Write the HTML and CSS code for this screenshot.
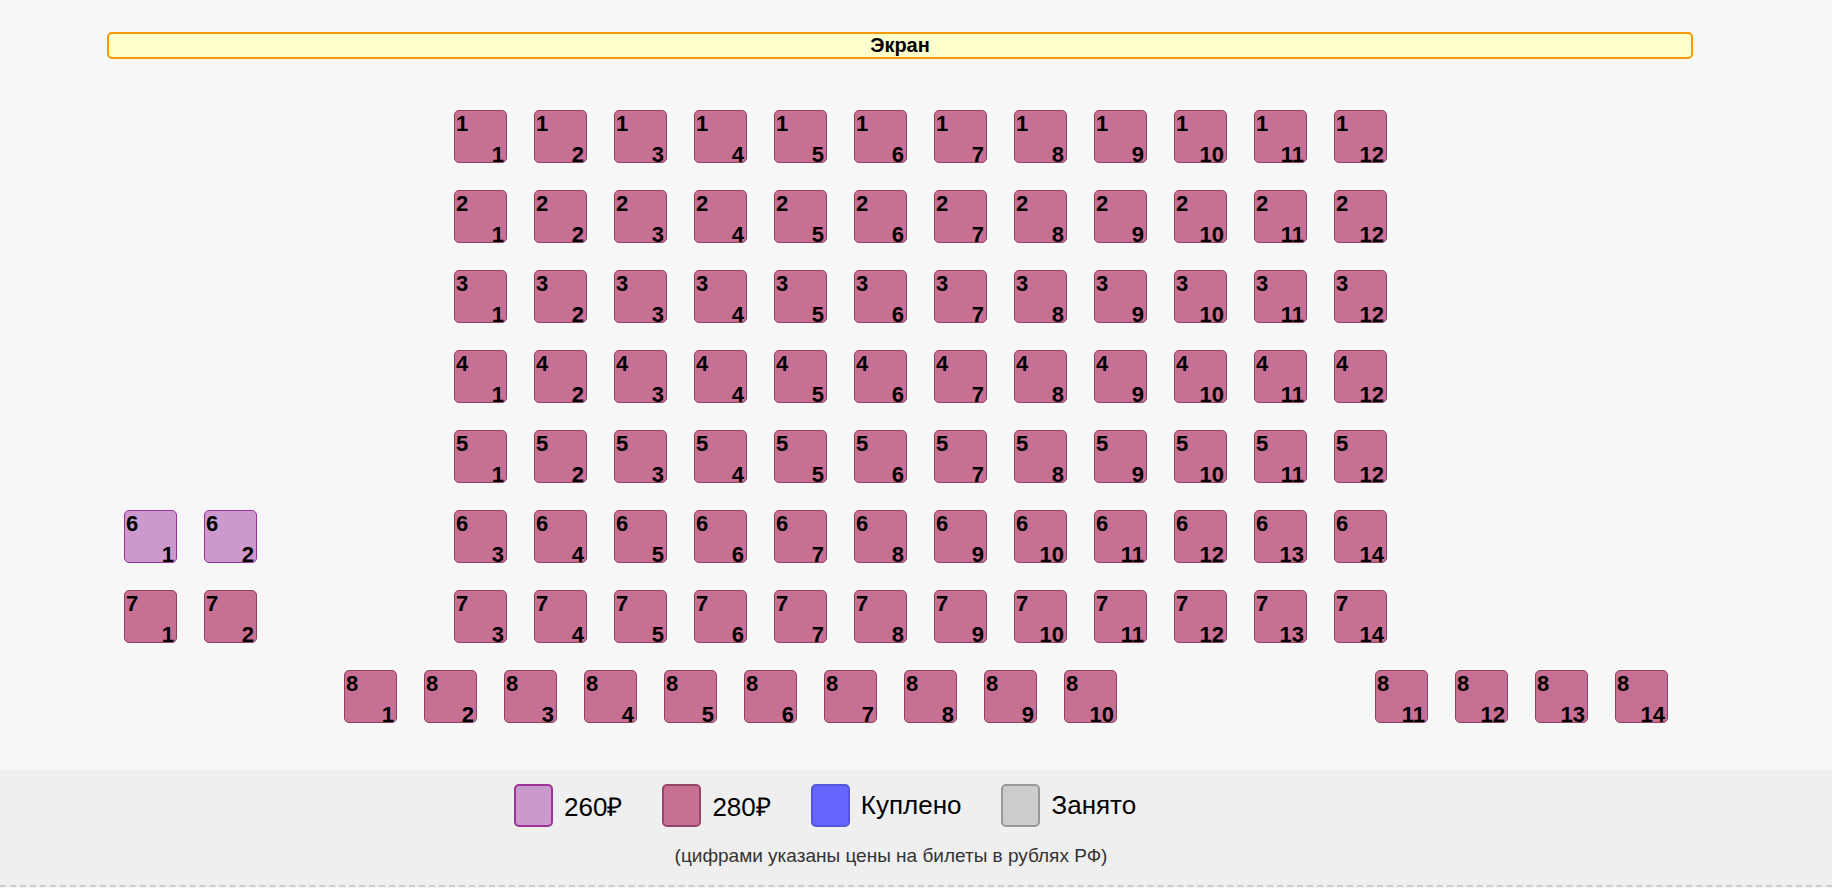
FILE: index.html
```html
<!DOCTYPE html>
<html lang="ru">
<head>
<meta charset="utf-8">
<title>Схема зала</title>
<link rel="stylesheet" href="styles.css">
</head>
<body>
<div class="page">
  <div class="screen">Экран</div>
  <div class="hall">
    <div class="row row-main">
      <div class="seat"><span class="r">1</span><span class="n">1</span></div>
      <div class="seat"><span class="r">1</span><span class="n">2</span></div>
      <div class="seat"><span class="r">1</span><span class="n">3</span></div>
      <div class="seat"><span class="r">1</span><span class="n">4</span></div>
      <div class="seat"><span class="r">1</span><span class="n">5</span></div>
      <div class="seat"><span class="r">1</span><span class="n">6</span></div>
      <div class="seat"><span class="r">1</span><span class="n">7</span></div>
      <div class="seat"><span class="r">1</span><span class="n">8</span></div>
      <div class="seat"><span class="r">1</span><span class="n">9</span></div>
      <div class="seat"><span class="r">1</span><span class="n">10</span></div>
      <div class="seat"><span class="r">1</span><span class="n">11</span></div>
      <div class="seat"><span class="r">1</span><span class="n">12</span></div>
    </div>
    <div class="row row-main">
      <div class="seat"><span class="r">2</span><span class="n">1</span></div>
      <div class="seat"><span class="r">2</span><span class="n">2</span></div>
      <div class="seat"><span class="r">2</span><span class="n">3</span></div>
      <div class="seat"><span class="r">2</span><span class="n">4</span></div>
      <div class="seat"><span class="r">2</span><span class="n">5</span></div>
      <div class="seat"><span class="r">2</span><span class="n">6</span></div>
      <div class="seat"><span class="r">2</span><span class="n">7</span></div>
      <div class="seat"><span class="r">2</span><span class="n">8</span></div>
      <div class="seat"><span class="r">2</span><span class="n">9</span></div>
      <div class="seat"><span class="r">2</span><span class="n">10</span></div>
      <div class="seat"><span class="r">2</span><span class="n">11</span></div>
      <div class="seat"><span class="r">2</span><span class="n">12</span></div>
    </div>
    <div class="row row-main">
      <div class="seat"><span class="r">3</span><span class="n">1</span></div>
      <div class="seat"><span class="r">3</span><span class="n">2</span></div>
      <div class="seat"><span class="r">3</span><span class="n">3</span></div>
      <div class="seat"><span class="r">3</span><span class="n">4</span></div>
      <div class="seat"><span class="r">3</span><span class="n">5</span></div>
      <div class="seat"><span class="r">3</span><span class="n">6</span></div>
      <div class="seat"><span class="r">3</span><span class="n">7</span></div>
      <div class="seat"><span class="r">3</span><span class="n">8</span></div>
      <div class="seat"><span class="r">3</span><span class="n">9</span></div>
      <div class="seat"><span class="r">3</span><span class="n">10</span></div>
      <div class="seat"><span class="r">3</span><span class="n">11</span></div>
      <div class="seat"><span class="r">3</span><span class="n">12</span></div>
    </div>
    <div class="row row-main">
      <div class="seat"><span class="r">4</span><span class="n">1</span></div>
      <div class="seat"><span class="r">4</span><span class="n">2</span></div>
      <div class="seat"><span class="r">4</span><span class="n">3</span></div>
      <div class="seat"><span class="r">4</span><span class="n">4</span></div>
      <div class="seat"><span class="r">4</span><span class="n">5</span></div>
      <div class="seat"><span class="r">4</span><span class="n">6</span></div>
      <div class="seat"><span class="r">4</span><span class="n">7</span></div>
      <div class="seat"><span class="r">4</span><span class="n">8</span></div>
      <div class="seat"><span class="r">4</span><span class="n">9</span></div>
      <div class="seat"><span class="r">4</span><span class="n">10</span></div>
      <div class="seat"><span class="r">4</span><span class="n">11</span></div>
      <div class="seat"><span class="r">4</span><span class="n">12</span></div>
    </div>
    <div class="row row-main">
      <div class="seat"><span class="r">5</span><span class="n">1</span></div>
      <div class="seat"><span class="r">5</span><span class="n">2</span></div>
      <div class="seat"><span class="r">5</span><span class="n">3</span></div>
      <div class="seat"><span class="r">5</span><span class="n">4</span></div>
      <div class="seat"><span class="r">5</span><span class="n">5</span></div>
      <div class="seat"><span class="r">5</span><span class="n">6</span></div>
      <div class="seat"><span class="r">5</span><span class="n">7</span></div>
      <div class="seat"><span class="r">5</span><span class="n">8</span></div>
      <div class="seat"><span class="r">5</span><span class="n">9</span></div>
      <div class="seat"><span class="r">5</span><span class="n">10</span></div>
      <div class="seat"><span class="r">5</span><span class="n">11</span></div>
      <div class="seat"><span class="r">5</span><span class="n">12</span></div>
    </div>
    <div class="row row-side">
      <div class="seat cheap"><span class="r">6</span><span class="n">1</span></div>
      <div class="seat cheap"><span class="r">6</span><span class="n">2</span></div>
      <div class="seat aisle-side"><span class="r">6</span><span class="n">3</span></div>
      <div class="seat"><span class="r">6</span><span class="n">4</span></div>
      <div class="seat"><span class="r">6</span><span class="n">5</span></div>
      <div class="seat"><span class="r">6</span><span class="n">6</span></div>
      <div class="seat"><span class="r">6</span><span class="n">7</span></div>
      <div class="seat"><span class="r">6</span><span class="n">8</span></div>
      <div class="seat"><span class="r">6</span><span class="n">9</span></div>
      <div class="seat"><span class="r">6</span><span class="n">10</span></div>
      <div class="seat"><span class="r">6</span><span class="n">11</span></div>
      <div class="seat"><span class="r">6</span><span class="n">12</span></div>
      <div class="seat"><span class="r">6</span><span class="n">13</span></div>
      <div class="seat"><span class="r">6</span><span class="n">14</span></div>
    </div>
    <div class="row row-side">
      <div class="seat"><span class="r">7</span><span class="n">1</span></div>
      <div class="seat"><span class="r">7</span><span class="n">2</span></div>
      <div class="seat aisle-side"><span class="r">7</span><span class="n">3</span></div>
      <div class="seat"><span class="r">7</span><span class="n">4</span></div>
      <div class="seat"><span class="r">7</span><span class="n">5</span></div>
      <div class="seat"><span class="r">7</span><span class="n">6</span></div>
      <div class="seat"><span class="r">7</span><span class="n">7</span></div>
      <div class="seat"><span class="r">7</span><span class="n">8</span></div>
      <div class="seat"><span class="r">7</span><span class="n">9</span></div>
      <div class="seat"><span class="r">7</span><span class="n">10</span></div>
      <div class="seat"><span class="r">7</span><span class="n">11</span></div>
      <div class="seat"><span class="r">7</span><span class="n">12</span></div>
      <div class="seat"><span class="r">7</span><span class="n">13</span></div>
      <div class="seat"><span class="r">7</span><span class="n">14</span></div>
    </div>
    <div class="row row-back">
      <div class="seat"><span class="r">8</span><span class="n">1</span></div>
      <div class="seat"><span class="r">8</span><span class="n">2</span></div>
      <div class="seat"><span class="r">8</span><span class="n">3</span></div>
      <div class="seat"><span class="r">8</span><span class="n">4</span></div>
      <div class="seat"><span class="r">8</span><span class="n">5</span></div>
      <div class="seat"><span class="r">8</span><span class="n">6</span></div>
      <div class="seat"><span class="r">8</span><span class="n">7</span></div>
      <div class="seat"><span class="r">8</span><span class="n">8</span></div>
      <div class="seat"><span class="r">8</span><span class="n">9</span></div>
      <div class="seat"><span class="r">8</span><span class="n">10</span></div>
      <div class="seat aisle-back"><span class="r">8</span><span class="n">11</span></div>
      <div class="seat"><span class="r">8</span><span class="n">12</span></div>
      <div class="seat"><span class="r">8</span><span class="n">13</span></div>
      <div class="seat"><span class="r">8</span><span class="n">14</span></div>
    </div>
  </div>
  <div class="legend">
    <div class="legend-items">
      <div class="legend-item"><span class="swatch sw-260"></span><span class="legend-label">260₽</span></div>
      <div class="legend-item"><span class="swatch sw-280"></span><span class="legend-label">280₽</span></div>
      <div class="legend-item"><span class="swatch sw-bought"></span><span class="legend-label">Куплено</span></div>
      <div class="legend-item"><span class="swatch sw-taken"></span><span class="legend-label">Занято</span></div>
    </div>
    <p class="legend-note">(цифрами указаны цены на билеты в рублях РФ)</p>
  </div>
</div>
</body>
</html>
```

FILE: styles.css
```css
html, body {
  margin: 0;
  padding: 0;
}

body {
  background: #f7f7f7;
  font-family: "Liberation Sans", Arial, sans-serif;
  color: #000;
}

.page {
  width: 1832px;
}

.screen {
  margin: 32px 139px 0 107px;
  height: 23px;
  line-height: 23px;
  border: 2px solid #ff9900;
  border-radius: 5px;
  background: #ffffcc;
  text-align: center;
  font-weight: bold;
  font-size: 20px;
}

.hall {
  display: flex;
  flex-direction: column;
  gap: 27px;
  padding-top: 51px;
}

.row {
  display: flex;
  gap: 27px;
}

.row-main {
  padding-left: 454px;
}

.row-side {
  padding-left: 124px;
}

.row-back {
  padding-left: 344px;
}

.aisle-side {
  margin-left: 170px;
}

.aisle-back {
  margin-left: 231px;
}

.seat {
  box-sizing: border-box;
  width: 53px;
  height: 53px;
  flex: none;
  border: 1px solid #8f4063;
  border-radius: 5px;
  background: #c87094;
  display: flex;
  flex-direction: column;
  justify-content: space-between;
  padding: 2px 2px 0 1px;
  font-weight: bold;
  font-size: 22px;
  line-height: 22px;
}

.seat.cheap {
  background: #cc99cc;
  border-color: #993399;
}

.seat .r {
  align-self: flex-start;
}

.seat .n {
  align-self: flex-end;
  margin-bottom: -4px;
}

.legend {
  margin-top: 47px;
  background: #efefef;
  padding: 14px 0 18px;
  border-bottom: 2px dashed #cccccc;
}

.legend-items {
  display: flex;
  gap: 40px;
  padding-left: 514px;
}

.legend-item {
  display: flex;
  align-items: center;
  gap: 11px;
}

.swatch {
  box-sizing: border-box;
  width: 39px;
  height: 43px;
  border: 2px solid;
  border-radius: 5px;
}

.sw-260 {
  background: #cc99cc;
  border-color: #993399;
}

.sw-280 {
  background: #c87094;
  border-color: #96466a;
}

.sw-bought {
  background: #6666ff;
  border-color: #5555dd;
}

.sw-taken {
  background: #cccccc;
  border-color: #999999;
}

.legend-label {
  font-size: 26px;
}

.legend-note {
  margin: 18px 157px 0 107px;
  text-align: center;
  font-size: 19px;
  color: #333;
}
```
